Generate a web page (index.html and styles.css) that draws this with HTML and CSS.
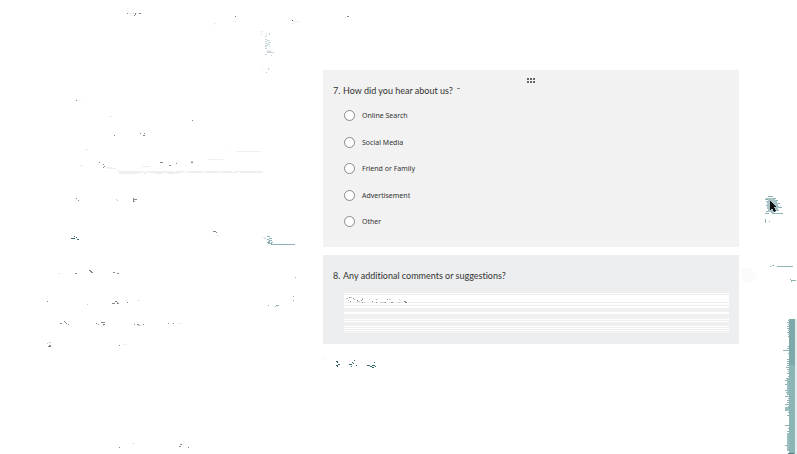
FILE: index.html
```html
<!DOCTYPE html>
<html lang="en">
<head>
    <meta charset="UTF-8">
    <meta name="viewport" content="width=device-width, initial-scale=1.0">
    <title>Survey</title>
    <link rel="stylesheet" href="styles.css">
</head>
<body>

    <!-- Faint traces on the left -->
    <svg class="traces traces-left" width="400" height="454" aria-hidden="true">
        <path class="faint" d="M129 13.5h12M130 15.5h3M233 21.5h4M234 19.5h2M293 21.5h6M291 23.5h3M214 23.5h2M215 26.5h1M260 31.5h3M260 33.5h3M260 35.5h2M262 66.5h1M262 70.5h1M78 100.5h3M236 151.5h24M228 151.5h1M262 151.5h1M208 159.5h15M106 167.5h6M107 168.5h9M142 166.5h8M117 170.5h2M119 171.5h25M146 171.5h28M176 171.5h8M186 171.5h34M222 171.5h10M234 171.5h29M119 172.5h23M144 172.5h3M149 172.5h34M185 172.5h2M189 172.5h14M205 172.5h32M240 172.5h23M119 173.5h19M143 173.5h4M155 173.5h8M167 173.5h11M215 235.5h4M262 237.5h4M178 323.5h5M123 344.5h4M322 358.5h2"/>
        <path class="light" d="M110 116.5h1M86 149.5h1M81 165.5h1M191 161.5h2M116 199.5h1M117 200.5h1M59 273.5h1M87 304.5h1M138 300.5h1M126 300.5h1M138 325.5h3M103 325.5h1M49 342.5h2M47 343.5h1M133 443.5h1M345 17.5h1M268 68v2M266 72.5h1"/>
        <path class="grey" d="M127 13.5h1M135 13.5h1M139 13.5h2M134 15.5h1M135 14.5h1M235 16.5h1M347 16.5h2M76 100.5h1M192 120.5h1M114 135.5h1M140 133.5h1M144 133.5h1M143 135.5h2M99 162.5h1M103 164.5h1M103 167.5h1M104 166.5h1M160 162.5h3M169 165.5h2M176 163.5h1M191 162.5h2M76 198.5h1M78 200.5h1M133.5 198v4M134 199.5h3M134 201.5h1M213 231.5h3M216 232.5h1M75 273.5h2M89 270.5h2M90 271.5h2M91 272.5h2M113 272.5h2M117 273.5h2M47 301.5h1M115 301.5h2M117 302.5h1M112 303.5h3M117 303.5h2M127 302.5h1M60 323.5h2M64 321.5h1M65 322.5h1M66 323.5h1M68 324.5h1M96 323.5h1M98 324.5h1M101 322.5h4M103 324.5h2M134 324.5h1M137 324.5h2M143 324.5h1M168 323.5h1M173 323.5h1M49 345.5h2M48 346.5h3M119 345.5h1M119 447.5h1M180 444.5h2M179 446.5h2M188 447.5h1"/>
        <path class="pale-teal" d="M269.5 33v2M266 34.5h1M265 36.5h2M265 39.5h2M267 40.5h3M265 41.5h2M268 42.5h3M265 43.5h2M267 44.5h3M265 45.5h3M265 46.5h2M269 46.5h1M265 48.5h2M267 50.5h1M270 50.5h1M267 51.5h4M267 52.5h7M265 54.5h2M271 55.5h1M264 238.5h2"/>
        <path class="teal" d="M267 236.5h3M269 238.5h3M267 239.5h2M269 240.5h3M268 241.5h2M271 242.5h2M267 242.5h3M268 243.5h4M271 244.5h24M295 277.5h1M268 305.5h1M276 305.5h3M275 306.5h1M293 296.5h1M293 300.5h1"/>
        <path class="deep-teal" d="M292 20.5h1M74 236.5h1M76 237.5h1M71 238.5h4M77 239.5h2M336 361.5h2M337 362.5h1M338 364.5h2M336 365.5h2M337 366.5h1M354 360.5h1M352 362.5h1M353 363.5h1M349 364.5h3M351 366.5h1M356 365.5h1M367 365.5h3M370 366.5h2M374 362.5h1M372 365.5h3M372 367.5h2M375 366.5h1"/>
    </svg>

    <main class="form">
        <section class="card">
            <span class="drag-handle"></span>
            <fieldset class="question">
                <legend class="title"><span class="number">7.</span>How did you hear about us?<span class="required"></span></legend>
                <div class="choices">
                    <label class="choice"><input type="radio" name="source">Online Search</label>
                    <label class="choice"><input type="radio" name="source">Social Media</label>
                    <label class="choice"><input type="radio" name="source">Friend or Family</label>
                    <label class="choice"><input type="radio" name="source">Advertisement</label>
                    <label class="choice"><input type="radio" name="source">Other</label>
                </div>
            </fieldset>
        </section>

        <section class="card card-comments">
            <label class="title" for="comments"><span class="number">8.</span>Any additional comments or suggestions?</label>
            <div class="answer">
                <textarea id="comments" name="comments"></textarea>
                <svg class="answer-traces" width="70" height="14" aria-hidden="true">
                    <path class="light" d="M1 5.5h2M3 7.5h1M5 4.5h2M9 6.5h1M12 8.5h3M17 5.5h1M19 9.5h1M24 6.5h1M31 6.5h2M35 9.5h6M44 6.5h2M53 9.5h2M54 6.5h1"/>
                    <path class="grey" d="M4 4.5h1M8 5.5h1M5 8.5h1M12 7.5h1M17 6.5h1M16 7.5h1M17 9.5h1M27 8.5h1M31 9.5h1M42 6.5h1M40 9.5h1M46 9.5h2M59 8.5h2M60 9.5h2"/>
                </svg>
            </div>
        </section>
    </main>

    <!-- Pointer and scroll strip on the right -->
    <svg class="traces traces-right" width="57" height="454" aria-hidden="true">
        <path class="smudge" d="M2 269l8-2 3 4 4 3-2 6-5 3-8-2z"/>
        <path class="teal" d="M28 196.5h5M26 198.5h10M25 199.5h5M35 200.5h3M26 201.5h3M37 203.5h3M26 205.5h3M38 207.5h4M27 208.5h3M36 210.5h3M26 211.5h4M25 213.5h4M32 213.5h11M25.5 219v4M29 221.5h1M37 266.5h16M30 266.5h1M32 265.5h2M50 279.5h1M51 280.5h5M51 281.5h1"/>
        <path class="glow" d="M28 198h5l4 3 2 6-2 4-4 2-5-1-1-7z"/>
        <path class="pointer" d="M30 201v9l2-2 2 4 2-1-2-4h2z"/>
        <path class="strip-edge" d="M55 319h2v135h-2z"/>
        <path class="strip" d="M49 319h6v46h-6z"/>
        <path class="strip strip-low" d="M49 365h6v89h-6z"/>
        <path class="teal" d="M48 320.5h2M47 322.5h2M48 324.5h2M47 326.5h2M47 328.5h2M48 330.5h2M47 332.5h2M48 334.5h2M48 336.5h1M48 346.5h1M47 348.5h2M43 350.5h6M48 353.5h1M47 359.5h2M47 361.5h2M47 363.5h2M47 365.5h2M46 367.5h3M47 369.5h2M48 371.5h1M47 373.5h2M48 376.5h1M46 378.5h3M45 380.5h4M48 382.5h1M45 384.5h4M47 386.5h2M47 388.5h2M45 390.5h4M46 392.5h3M47 394.5h2M45 396.5h4M48 398.5h1M47 400.5h2M47 402.5h2M45 404.5h4M48 406.5h1M47 409.5h2M48 412.5h1M47 415.5h2M45 425.5h4M48 428.5h1M47 431.5h2M45 445.5h4"/>
        <path class="strip-side" d="M45 407h4v4h-4zM47 379h2v15h-2zM47 433h2v18h-2z"/>
        <path class="strip-end" d="M48 453h6v1h-6z"/>
    </svg>

</body>
</html>
```
FILE: styles.css
```css
body {
    font-family: "Noto Sans", "Open Sans", sans-serif;
    background-color: #fff;
    color: #333;
    margin: 0;
    min-height: 100vh;
    position: relative;
}

.form {
    display: flex;
    flex-direction: column;
    gap: 8px;
    padding: 70px 58px 0 323px;
}

.card {
    background-color: #f2f2f2;
    padding: 8px 10px 20px;
}

.card-comments {
    background-color: #edeeef;
    padding: 15px 10px 11px;
}

.drag-handle {
    display: block;
    width: 8px;
    height: 5px;
    margin: 0 auto 2px;
    background: repeating-linear-gradient(to right, #666 0 2px, transparent 2px 3px);
    clip-path: polygon(0 0, 100% 0, 100% 40%, 0 40%, 0 60%, 100% 60%, 100% 100%, 0 100%);
}

.question {
    border: 0;
    margin: 0;
    padding: 0;
}

.title {
    display: flex;
    align-items: center;
    padding: 0;
    font-family: Lato, "Noto Sans", sans-serif;
    font-size: 9px;
    font-variant-ligatures: none;
    line-height: 12px;
}

.number {
    width: 10px;
}

.required {
    width: 2px;
    height: 2px;
    margin: 0 0 3px 4px;
    border-top: 1px dotted #888;
}

.choices {
    display: flex;
    flex-direction: column;
    justify-content: space-between;
    height: 117px;
    margin: 13px 0 0 11px;
}

.choice {
    display: flex;
    align-items: center;
    gap: 7px;
    font-size: 7px;
    line-height: 11px;
}

.choice input {
    appearance: none;
    box-sizing: border-box;
    width: 11px;
    height: 11px;
    margin: 0;
    border: 1px solid #888;
    border-radius: 50%;
    background-color: #fff;
}

.choice input:checked {
    background-color: #03787c;
}

.answer {
    position: relative;
    margin: 11px 0 0 11px;
}

textarea {
    display: block;
    box-sizing: border-box;
    width: 100%;
    height: 40px;
    padding: 4px;
    border: 0;
    resize: none;
    font: inherit;
    font-size: 7px;
    background: linear-gradient(#fff 0 1px, #eee 1px 2px, #fff 2px 9px, #eee 9px 10px, #fff 10px 12px, #eee 12px 13px, #fff 13px 15px, #f0f0f0 15px 19px, #fff 19px 21px, #f0f0f0 21px 26px, #fff 26px 27px, #f0f0f0 27px 28px, #fff 28px 29px, #f0f0f0 29px 33px, #fff 33px 34px, #eee 34px 35px, #fff 35px 36px, #eee 36px 37px, #fff 37px 38px, #f3f3f3 38px 40px);
}

.answer-traces {
    position: absolute;
    top: 0;
    left: 1px;
    pointer-events: none;
}

.traces {
    position: absolute;
    top: 0;
    pointer-events: none;
}

.traces-left {
    left: 0;
}

.traces-right {
    right: 0;
}

svg path {
    shape-rendering: crispEdges;
}

.faint {
    stroke: #efefef;
}

.light {
    stroke: #ccc;
}

.grey {
    stroke: #888;
}

.pale-teal {
    stroke: #cbd8da;
}

.teal {
    stroke: #8fb3b5;
}

.deep-teal {
    stroke: #34676c;
}

.smudge {
    fill: #fafafa;
}

.glow {
    fill: #a9c4c7;
}

.pointer {
    fill: #111;
}

.strip {
    fill: #7ea9ab;
}

.strip-low {
    fill: #8cb5b6;
}

.strip-side {
    fill: #9bbfc0;
}

.strip-edge {
    fill: #e6eff0;
}

.strip-end {
    fill: #56777a;
}
```
